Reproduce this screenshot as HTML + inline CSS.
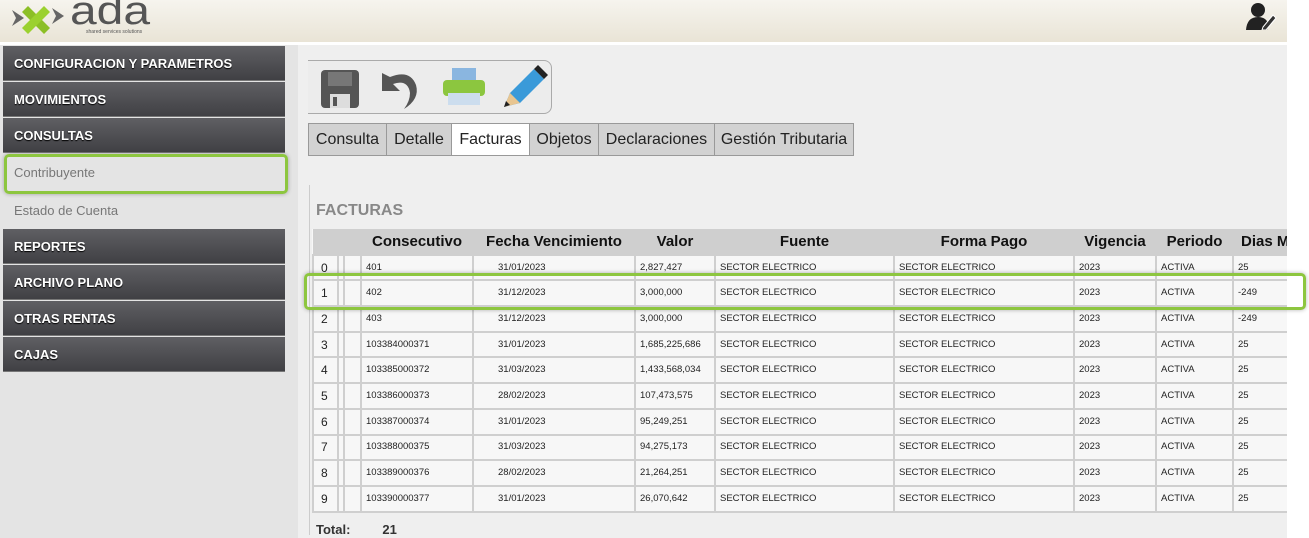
<!DOCTYPE html>
<html><head><meta charset="utf-8"><style>
*{margin:0;padding:0;box-sizing:border-box}
body{width:1309px;height:538px;overflow:hidden;background:#fff;font-family:"Liberation Sans",Arial,sans-serif;position:relative}
#hdr{position:absolute;left:0;top:0;width:1287px;height:42px;background:linear-gradient(#f6f4ee,#e9e4d6)}
#wrap{position:absolute;left:0;top:45px;width:1287px;height:493px;background:#efefef}
#side{position:absolute;left:0;top:0;width:298px;height:493px;background:#e4e4e4}
.mi{position:absolute;left:3px;width:282px;height:35px;background:linear-gradient(#5f5f63,#404044);color:#fff;font-weight:bold;font-size:13px;line-height:35px;padding-left:11px;text-shadow:0 1px 1px #000;border-bottom:1px solid #777}
.si{position:absolute;left:14px;font-size:13px;color:#777}
#tb{position:absolute;left:308px;top:15px;width:244px;height:54px;border:1px solid #aaa;border-left:none;border-radius:0 8px 8px 0;background:#ececec}
.tab{position:absolute;top:78px;height:33px;background:#d2d2d2;border:1px solid #999;font-size:16px;color:#222;line-height:31px;text-align:center}
#tw{position:absolute;left:312px;top:184px;width:975px;height:285px;overflow:hidden}
table{border-collapse:collapse;font-size:9.5px;background:#f7f7f7;table-layout:fixed;width:1000px}
td{border:2px solid #cfcfcf;padding:0 0 0 4px;color:#222;white-space:nowrap;overflow:hidden;line-height:12px}
tr{height:25.7px}
th{background:#cfcfcf;height:25px;font-size:15px;font-weight:bold;color:#111;text-align:center;white-space:nowrap;overflow:hidden;padding:0}
td.n{font-size:12px;text-align:left;padding-left:7px}
.hl{position:absolute;border:3px solid #8dc63f;border-radius:5px;box-shadow:0 0 4px rgba(0,0,0,.3)}
</style></head><body>
<div id="hdr">
<svg style="position:absolute;left:10px;top:0" width="150" height="40" viewBox="0 0 150 40">
<path d="M2 10 L14 18 L2 26 L6 18Z" fill="#666"/>
<path d="M18 6 L40 28 L34 34 L12 12Z" fill="#8cbf26"/>
<path d="M12 28 L34 6 L40 12 L18 34Z" fill="#9bd12f"/>
<path d="M42 8 L54 16 L42 24 L46 16Z" fill="#666"/>
<text x="60" y="24" font-family="Liberation Sans" font-size="40" fill="#555" textLength="80" lengthAdjust="spacingAndGlyphs">ada</text>
<text x="76" y="33" font-family="Liberation Sans" font-size="5" fill="#555">shared services solutions</text>
</svg>
<svg style="position:absolute;left:1245px;top:2px" width="32" height="28" viewBox="0 0 32 28">
<circle cx="13" cy="8" r="7" fill="#222"/><path d="M1 28 Q2 15 13 15 Q22 15 24 24 L22 28Z" fill="#222"/>
<path d="M18 25 L28 13 L31 16 L21 28 L17 28Z" fill="#333" stroke="#fff" stroke-width="1"/></svg>
</div>
<div id="wrap">
<div id="side">
<div class="mi" style="top:1px">CONFIGURACION Y PARAMETROS</div>
<div class="mi" style="top:37px">MOVIMIENTOS</div>
<div class="mi" style="top:73px">CONSULTAS</div>
<div class="si" style="top:120px">Contribuyente</div>
<div class="si" style="top:158px">Estado de Cuenta</div>
<div class="mi" style="top:184px">REPORTES</div>
<div class="mi" style="top:220px">ARCHIVO PLANO</div>
<div class="mi" style="top:256px">OTRAS RENTAS</div>
<div class="mi" style="top:292px">CAJAS</div>
<div class="hl" style="left:4px;top:109px;width:284px;height:40px"></div>
</div>
<div id="tb">
<svg style="position:absolute;left:12px;top:8px" width="42" height="40" viewBox="0 0 42 40"><rect x="1" y="1" width="38" height="38" rx="4" fill="#555"/><rect x="8" y="3" width="24" height="14" fill="#777"/><rect x="10" y="25" width="20" height="14" fill="#ddd"/><rect x="13" y="28" width="4" height="9" fill="#555"/></svg>
<svg style="position:absolute;left:72px;top:8px" width="40" height="42" viewBox="0 0 40 42"><path d="M2 4 L2 22 L20 22 L13 15 Q28 10 30 24 Q30 32 24 40 Q40 30 36 16 Q30 0 10 8Z" fill="#555"/></svg>
<svg style="position:absolute;left:134px;top:6px" width="44" height="40" viewBox="0 0 44 40"><rect x="10" y="1" width="24" height="14" fill="#8ab6e0"/><rect x="1" y="13" width="42" height="16" rx="4" fill="#8cc63f"/><rect x="6" y="26" width="32" height="12" fill="#cde"/></svg>
<svg style="position:absolute;left:190px;top:2px" width="50" height="50" viewBox="0 0 50 50"><path d="M6 44 L12 30 L36 6 L46 16 L22 40Z" fill="#3a9ad9"/><path d="M6 44 L12 30 L22 40Z" fill="#e8c590"/><path d="M6 44 L8 38 L12 42Z" fill="#222"/><path d="M36 6 L40 2 L50 12 L46 16Z" fill="#222"/></svg>
</div>
<div class="tab" style="left:308px;width:79px">Consulta</div>
<div class="tab" style="left:386px;width:66px">Detalle</div>
<div class="tab" style="left:451px;width:79px;background:#fff">Facturas</div>
<div class="tab" style="left:529px;width:70px">Objetos</div>
<div class="tab" style="left:598px;width:117px">Declaraciones</div>
<div class="tab" style="left:714px;width:140px">Gestión Tributaria</div>
<div style="position:absolute;left:309px;top:140px;width:1px;height:350px;background:#ccc"></div>
<div style="position:absolute;left:316px;top:157px;font-size:16px;font-weight:bold;color:#888">FACTURAS</div>
<div id="tw">
<table>
<colgroup><col style="width:25px"><col style="width:6px"><col style="width:17px"><col style="width:112px"><col style="width:162px"><col style="width:80px"><col style="width:179px"><col style="width:180px"><col style="width:82px"><col style="width:77px"><col style="width:80px"></colgroup>
<tr><th></th><th></th><th></th><th>Consecutivo</th><th>Fecha Vencimiento</th><th>Valor</th><th>Fuente</th><th>Forma Pago</th><th>Vigencia</th><th>Periodo</th><th style="text-align:left;padding-left:8px">Dias Mora</th></tr>
<tr><td class="n">0</td><td></td><td></td><td>401</td><td style="padding-left:24px">31/01/2023</td><td>2,827,427</td><td>SECTOR ELECTRICO</td><td>SECTOR ELECTRICO</td><td>2023</td><td>ACTIVA</td><td>25</td></tr>
<tr><td class="n">1</td><td></td><td></td><td>402</td><td style="padding-left:24px">31/12/2023</td><td>3,000,000</td><td>SECTOR ELECTRICO</td><td>SECTOR ELECTRICO</td><td>2023</td><td>ACTIVA</td><td>-249</td></tr>
<tr><td class="n">2</td><td></td><td></td><td>403</td><td style="padding-left:24px">31/12/2023</td><td>3,000,000</td><td>SECTOR ELECTRICO</td><td>SECTOR ELECTRICO</td><td>2023</td><td>ACTIVA</td><td>-249</td></tr>
<tr><td class="n">3</td><td></td><td></td><td>103384000371</td><td style="padding-left:24px">31/01/2023</td><td>1,685,225,686</td><td>SECTOR ELECTRICO</td><td>SECTOR ELECTRICO</td><td>2023</td><td>ACTIVA</td><td>25</td></tr>
<tr><td class="n">4</td><td></td><td></td><td>103385000372</td><td style="padding-left:24px">31/03/2023</td><td>1,433,568,034</td><td>SECTOR ELECTRICO</td><td>SECTOR ELECTRICO</td><td>2023</td><td>ACTIVA</td><td>25</td></tr>
<tr><td class="n">5</td><td></td><td></td><td>103386000373</td><td style="padding-left:24px">28/02/2023</td><td>107,473,575</td><td>SECTOR ELECTRICO</td><td>SECTOR ELECTRICO</td><td>2023</td><td>ACTIVA</td><td>25</td></tr>
<tr><td class="n">6</td><td></td><td></td><td>103387000374</td><td style="padding-left:24px">31/01/2023</td><td>95,249,251</td><td>SECTOR ELECTRICO</td><td>SECTOR ELECTRICO</td><td>2023</td><td>ACTIVA</td><td>25</td></tr>
<tr><td class="n">7</td><td></td><td></td><td>103388000375</td><td style="padding-left:24px">31/03/2023</td><td>94,275,173</td><td>SECTOR ELECTRICO</td><td>SECTOR ELECTRICO</td><td>2023</td><td>ACTIVA</td><td>25</td></tr>
<tr><td class="n">8</td><td></td><td></td><td>103389000376</td><td style="padding-left:24px">28/02/2023</td><td>21,264,251</td><td>SECTOR ELECTRICO</td><td>SECTOR ELECTRICO</td><td>2023</td><td>ACTIVA</td><td>25</td></tr>
<tr><td class="n">9</td><td></td><td></td><td>103390000377</td><td style="padding-left:24px">31/01/2023</td><td>26,070,642</td><td>SECTOR ELECTRICO</td><td>SECTOR ELECTRICO</td><td>2023</td><td>ACTIVA</td><td>25</td></tr>
</table>
</div>
<div style="position:absolute;left:316px;top:477px;font-size:13px;font-weight:bold;color:#333">Total:<span style="margin-left:32px">21</span></div>
<div class="hl" style="left:304px;top:228px;width:1002px;height:37px"></div>
</div>
</body></html>
